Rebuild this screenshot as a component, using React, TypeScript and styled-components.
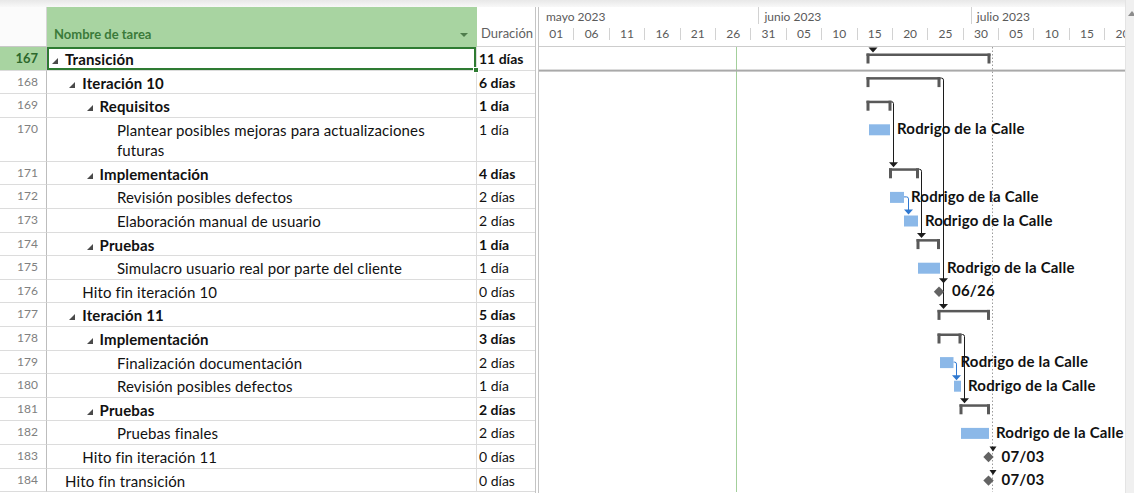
import React from "react";
import styled, { createGlobalStyle } from "styled-components";

const ROW_H = 23.6;
const TALL_H = 44;
const SHEET_GREEN = "#a8d4a1";
const DARK_GREEN = "#2e7b32";
const DAY_CELL = 35.4;
const DAY_W = 7.08;

type Kind = "summary" | "task" | "milestone";

interface Task {
  id: number;
  name: string;
  level: number;
  duration: string;
  kind: Kind;
  x1: number;
  x2: number;
  tall?: boolean;
  label?: string;
}

// x1 / x2 are pixels from the left edge of the chart area
const tasks: Task[] = [
  { id: 167, name: "Transición", level: 0, duration: "11 días", kind: "summary", x1: 327.5, x2: 451.5 },
  { id: 168, name: "Iteración 10", level: 1, duration: "6 días", kind: "summary", x1: 327.5, x2: 401.5 },
  { id: 169, name: "Requisitos", level: 2, duration: "1 día", kind: "summary", x1: 327.5, x2: 352.5 },
  {
    id: 170,
    name: "Plantear posibles mejoras para actualizaciones\nfuturas",
    level: 3,
    duration: "1 día",
    kind: "task",
    x1: 330,
    x2: 351,
    tall: true,
    label: "Rodrigo de la Calle",
  },
  { id: 171, name: "Implementación", level: 2, duration: "4 días", kind: "summary", x1: 350, x2: 380 },
  { id: 172, name: "Revisión posibles defectos", level: 3, duration: "2 días", kind: "task", x1: 351, x2: 365, label: "Rodrigo de la Calle" },
  { id: 173, name: "Elaboración manual de usuario", level: 3, duration: "2 días", kind: "task", x1: 365, x2: 379, label: "Rodrigo de la Calle" },
  { id: 174, name: "Pruebas", level: 2, duration: "1 día", kind: "summary", x1: 377.5, x2: 401 },
  { id: 175, name: "Simulacro usuario real por parte del cliente", level: 3, duration: "1 día", kind: "task", x1: 379, x2: 401, label: "Rodrigo de la Calle" },
  { id: 176, name: "Hito fin iteración 10", level: 1, duration: "0 días", kind: "milestone", x1: 400, x2: 400, label: "06/26" },
  { id: 177, name: "Iteración 11", level: 1, duration: "5 días", kind: "summary", x1: 398.5, x2: 451 },
  { id: 178, name: "Implementación", level: 2, duration: "3 días", kind: "summary", x1: 398.5, x2: 422.5 },
  { id: 179, name: "Finalización documentación", level: 3, duration: "2 días", kind: "task", x1: 401, x2: 414.5, label: "Rodrigo de la Calle" },
  { id: 180, name: "Revisión posibles defectos", level: 3, duration: "1 día", kind: "task", x1: 415, x2: 422, label: "Rodrigo de la Calle" },
  { id: 181, name: "Pruebas", level: 2, duration: "2 días", kind: "summary", x1: 420.5, x2: 451 },
  { id: 182, name: "Pruebas finales", level: 3, duration: "2 días", kind: "task", x1: 422, x2: 450, label: "Rodrigo de la Calle" },
  { id: 183, name: "Hito fin iteración 11", level: 1, duration: "0 días", kind: "milestone", x1: 449.5, x2: 449.5, label: "07/03" },
  { id: 184, name: "Hito fin transición", level: 0, duration: "0 días", kind: "milestone", x1: 449.5, x2: 449.5, label: "07/03" },
];

const rowTops: number[] = [];
let acc = 0;
for (const t of tasks) {
  rowTops.push(acc);
  acc += t.tall ? TALL_H : ROW_H;
}
const rowIndex = (id: number) => tasks.findIndex((t) => t.id === id);
const topOf = (id: number) => rowTops[rowIndex(id)];

interface Link {
  from: number;
  x: number;
  to: { id: number; dy: number }[];
  blue?: boolean;
}

const links: Link[] = [
  { from: 168, x: 404.5, to: [{ id: 176, dy: 3.5 }, { id: 177, dy: 5.5 }] },
  { from: 169, x: 354.5, to: [{ id: 171, dy: 5.5 }] },
  { from: 171, x: 382.5, to: [{ id: 174, dy: 5.5 }] },
  { from: 178, x: 425.5, to: [{ id: 181, dy: 5.5 }] },
  { from: 172, x: 369.5, to: [{ id: 173, dy: 5.5 }], blue: true },
  { from: 179, x: 417.5, to: [{ id: 180, dy: 6 }], blue: true },
];

// arrows coming from predecessors outside the view
const looseArrows = [
  { id: 167, x: 334, dy: 5.5, w: 4.5 },
  { id: 183, x: 454, dy: 6.5, w: 3.5 },
  { id: 184, x: 454, dy: 6.5, w: 3.5 },
];

const months = [
  { name: "mayo 2023", days: 31 },
  { name: "junio 2023", days: 30 },
  { name: "julio 2023", days: 31 },
];

const dayLabels = ["01", "06", "11", "16", "21", "26", "31", "05", "10", "15", "20", "25", "30", "05", "10", "15", "20"];

const GlobalStyle = createGlobalStyle`
  *, *::before, *::after { box-sizing: border-box; }
  html, body { margin: 0; padding: 0; background: #fff; }
  body {
    font-family: Lato, "Open Sans", "Liberation Sans", sans-serif;
    overflow: hidden;
  }
`;

const Window = styled.div`
  display: flex;
  width: 1134px;
  height: 493px;
  overflow: hidden;
  background: #fff;
`;

const Main = styled.div`
  flex: 1;
  min-width: 0;
  display: flex;
  flex-direction: column;
`;

const TopStrip = styled.div`
  height: 7px;
  flex: none;
  background: linear-gradient(#e8e8e8, #f8f8f8);
`;

const Panes = styled.div`
  flex: 1;
  display: flex;
  min-height: 0;
`;

const Sheet = styled.div`
  width: 536px;
  flex: none;
  display: flex;
  flex-direction: column;
  border-right: 1px solid #c4c4c4;
`;

const Splitter = styled.div`
  width: 2px;
  flex: none;
  background: #fff;
`;

const SheetGrid = styled.div<{ $h: number }>`
  display: grid;
  grid-template-columns: 47px 430px 58px;
  height: ${(p) => p.$h}px;
  flex: none;
`;

const Corner = styled.div`
  border-right: 1px solid #d6d6d6;
  border-bottom: 1px solid #c8c8c8;
  background: #fbfbfb;
`;

const NameHead = styled.div`
  background: ${SHEET_GREEN};
  display: flex;
  align-items: flex-end;
  justify-content: space-between;
  padding: 0 9px 5px 7px;
  font-size: 13px;
  font-weight: 700;
  color: #3b7a3a;
`;

const HeadArrow = styled.span`
  width: 0;
  height: 0;
  border-left: 4px solid transparent;
  border-right: 4px solid transparent;
  border-top: 4px solid #4f7d4c;
  margin-bottom: 5px;
`;

const DurHead = styled.div`
  display: flex;
  align-items: flex-end;
  padding: 0 0 5px 4px;
  font-size: 13px;
  color: #5f5f5f;
  border-bottom: 1px solid #d4d4d4;
`;

const NumCell = styled.div<{ $active?: boolean }>`
  border-right: 1px solid #bdbdbd;
  border-bottom: 1px solid #dcdcdc;
  background: ${(p) => (p.$active ? SHEET_GREEN : "#fff")};
  color: ${(p) => (p.$active ? "#2c682c" : "#808080")};
  font-weight: ${(p) => (p.$active ? 700 : 400)};
  font-size: ${(p) => (p.$active ? 13 : 12)}px;
  text-align: right;
  padding: 3px 8px 0 0;
  line-height: 16px;
`;

const NameCell = styled.div<{ $level: number; $bold: boolean; $active?: boolean }>`
  position: relative;
  border-right: 1px solid #dcdcdc;
  border-bottom: 1px solid #dcdcdc;
  padding: 2px 0 0 ${(p) => 18 + p.$level * 17.3}px;
  font-size: 15px;
  letter-spacing: 0.12px;
  line-height: 20px;
  font-weight: ${(p) => (p.$bold ? 700 : 400)};
  color: #111;
  white-space: pre-line;
  box-shadow: ${(p) => (p.$active ? `inset 0 0 0 2px ${DARK_GREEN}` : "none")};

  ${(p) =>
    p.$active &&
    `
    &::after {
      content: "";
      position: absolute;
      right: -3px;
      bottom: -3px;
      width: 6px;
      height: 6px;
      background: ${DARK_GREEN};
      border: 1px solid #fff;
      z-index: 2;
    }
  `}
`;

const Caret = styled.span`
  display: inline-block;
  width: 0;
  height: 0;
  border-left: 6px solid transparent;
  border-bottom: 6px solid #4a4a4a;
  margin: 0 7px 0 -13px;
  vertical-align: 1px;
`;

const DurCell = styled.div<{ $bold: boolean }>`
  border-bottom: 1px solid #dcdcdc;
  padding: 2px 0 0 2px;
  font-size: 14px;
  line-height: 20px;
  font-weight: ${(p) => (p.$bold ? 700 : 400)};
  color: #111;
  white-space: nowrap;
`;

const Chart = styled.div`
  flex: 1;
  min-width: 0;
  display: flex;
  flex-direction: column;
  border-left: 1px solid #c4c4c4;
  overflow: hidden;
`;

const Timescale = styled.div`
  height: 40px;
  flex: none;
  border-bottom: 1px solid #cdcdcd;
  display: flex;
  flex-direction: column;
  font-size: 12px;
  color: #5a5a5a;
`;

const MonthTier = styled.div`
  display: flex;
  height: 17px;
  flex: none;
`;

const MonthCell = styled.div<{ $w: number; $first?: boolean }>`
  width: ${(p) => p.$w}px;
  flex: none;
  border-left: ${(p) => (p.$first ? "none" : "1px solid #d2d2d2")};
  padding-left: ${(p) => (p.$first ? 7 : 5)}px;
  line-height: 20px;
  white-space: nowrap;
`;

const DayTier = styled.div`
  display: flex;
  align-items: flex-start;
  height: 22px;
  flex: none;
`;

const DayCell = styled.div`
  width: ${DAY_CELL}px;
  flex: none;
  height: 12px;
  margin-top: 4px;
  border-right: 1px solid #d2d2d2;
  line-height: 12px;
  text-align: center;
  white-space: nowrap;
`;

const ChartBody = styled.div`
  flex: 1;
  min-height: 0;
  position: relative;
`;

const BarLabel = styled.text`
  font-family: Lato, "Open Sans", sans-serif;
  font-size: 15px;
  letter-spacing: 0.2px;
  font-weight: 700;
  fill: #111;
`;

const ScrollBar = styled.div`
  width: 9px;
  flex: none;
  background: #f0f0f0;
  border-left: 1px solid #e4e4e4;
`;

const ScrollArrow = styled.div`
  width: 0;
  height: 0;
  margin: 11px 0 0 2px;
  border-left: 4px solid transparent;
  border-right: 4px solid transparent;
  border-bottom: 5px solid #8c8c8c;
`;

const Arrowhead = ({ x, tip, color, w = 4.5 }: { x: number; tip: number; color: string; w?: number }) => (
  <polygon points={`${x - w},${tip - 5} ${x + w},${tip - 5} ${x},${tip}`} fill={color} />
);

const GanttBody = () => {
  const height = acc;
  const width = 590;
  return (
    <svg width={width} height={height} style={{ display: "block" }}>
      {/* status date and project finish */}
      <line x1={197.5} y1={0} x2={197.5} y2={height} stroke="#a3cf9b" strokeWidth={1} />
      <line x1={453.5} y1={0} x2={453.5} y2={height} stroke="#9c9c9c" strokeWidth={1} strokeDasharray="1.5 2" />
      <rect x={0} y={ROW_H - 1} width={width} height={2} fill="#a9a9a9" />

      {links.map((l) => {
        const from = tasks[rowIndex(l.from)];
        const y0 = topOf(l.from) + (l.blue ? 11.5 : 7.5);
        const tips = l.to.map((t) => topOf(t.id) + t.dy);
        const last = tips[tips.length - 1];
        const color = l.blue ? "#2f78d0" : "#1c1c1c";
        return (
          <g key={l.from}>
            <path
              d={`M ${from.x2} ${y0} H ${l.x - 2} Q ${l.x} ${y0} ${l.x} ${y0 + 2} V ${last - 4}`}
              fill="none"
              stroke={color}
              strokeWidth={1}
            />
            {tips.map((tip, i) => (
              <Arrowhead key={i} x={l.x} tip={tip} color={color} />
            ))}
          </g>
        );
      })}

      {looseArrows.map((a) => (
        <Arrowhead key={a.id} x={a.x} tip={topOf(a.id) + a.dy} color="#1c1c1c" w={a.w} />
      ))}

      {tasks.map((t, i) => {
        const y = rowTops[i];
        if (t.kind === "summary") {
          return (
            <g key={t.id} fill="#595959">
              <rect x={t.x1} y={y + 6.5} width={t.x2 - t.x1} height={2.5} />
              <rect x={t.x1} y={y + 6.5} width={3} height={10} />
              <rect x={t.x2 - 3} y={y + 6.5} width={3} height={10} />
            </g>
          );
        }
        if (t.kind === "task") {
          return (
            <g key={t.id}>
              <rect x={t.x1} y={y + 6.5} width={t.x2 - t.x1} height={11} fill="#8bb8e8" />
              <BarLabel x={t.x2 + 7} y={y + 10.5} dominantBaseline="central">
                {t.label}
              </BarLabel>
            </g>
          );
        }
        const cy = y + 12;
        const r = 5.2;
        return (
          <g key={t.id}>
            <polygon
              points={`${t.x1},${cy - r} ${t.x1 + r},${cy} ${t.x1},${cy + r} ${t.x1 - r},${cy}`}
              fill="#636363"
            />
            <BarLabel x={t.x1 + 13} y={y + 10.5} dominantBaseline="central">
              {t.label}
            </BarLabel>
          </g>
        );
      })}
    </svg>
  );
};

const App = () => {
  return (
    <>
      <GlobalStyle />
      <Window>
        <Main>
          <TopStrip />
          <Panes>
            <Sheet>
              <SheetGrid $h={40}>
                <Corner />
                <NameHead>
                  <span>Nombre de tarea</span>
                  <HeadArrow />
                </NameHead>
                <DurHead>Duración</DurHead>
              </SheetGrid>
              {tasks.map((t, i) => {
                const bold = t.kind === "summary";
                const active = i === 0;
                return (
                  <SheetGrid key={t.id} $h={t.tall ? TALL_H : ROW_H}>
                    <NumCell $active={active}>{t.id}</NumCell>
                    <NameCell $level={t.level} $bold={bold} $active={active}>
                      {bold && <Caret />}
                      {t.name}
                    </NameCell>
                    <DurCell $bold={bold}>{t.duration}</DurCell>
                  </SheetGrid>
                );
              })}
            </Sheet>
            <Splitter />
            <Chart>
              <Timescale>
                <MonthTier>
                  {months.map((m, i) => (
                    <MonthCell key={m.name} $w={m.days * DAY_W} $first={i === 0}>
                      {m.name}
                    </MonthCell>
                  ))}
                </MonthTier>
                <DayTier>
                  {dayLabels.map((d, i) => (
                    <DayCell key={i}>{d}</DayCell>
                  ))}
                </DayTier>
              </Timescale>
              <ChartBody>
                <GanttBody />
              </ChartBody>
            </Chart>
          </Panes>
        </Main>
        <ScrollBar>
          <ScrollArrow />
        </ScrollBar>
      </Window>
    </>
  );
};

export default App;
